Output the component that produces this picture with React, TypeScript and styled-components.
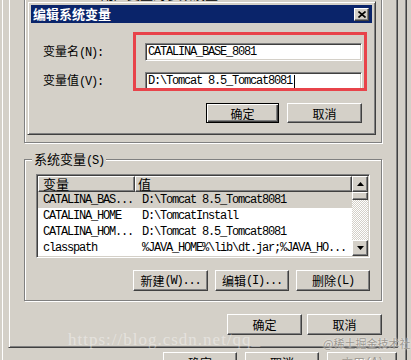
import React from "react";
import styled, { createGlobalStyle, css } from "styled-components";

const GlobalStyle = createGlobalStyle`
  html, body {
    margin: 0;
    padding: 0;
    background: #d4d0c8;
  }
`;

/* Styles */
const windowFrame = css`
  box-sizing: border-box;
  border: 1px solid;
  border-color: #d4d0c8 #404040 #404040 #d4d0c8;
  box-shadow: inset 1px 1px 0 #fff, inset -1px -1px 0 #808080;
  background: #d4d0c8;
`;

const raised = css`
  box-sizing: border-box;
  border: 1px solid;
  border-color: #fff #404040 #404040 #fff;
  box-shadow: inset -1px -1px 0 #808080, inset 1px 1px 0 #d4d0c8;
  background: #d4d0c8;
`;

const sunken = css`
  box-sizing: border-box;
  border: 1px solid;
  border-color: #808080 #fff #fff #808080;
  box-shadow: inset 1px 1px 0 #404040, inset -1px -1px 0 #d4d0c8;
`;

const Desktop = styled.div`
  position: relative;
  width: 411px;
  height: 360px;
  overflow: hidden;
  background: #d4d0c8;
  font-family: "Noto Sans CJK SC", sans-serif;
  font-size: 12px;
  color: #000;
`;

const Window = styled.div<{ $left: number; $top: number; $width: number; $height: number }>`
  ${windowFrame};
  position: absolute;
  left: ${p => p.$left}px;
  top: ${p => p.$top}px;
  width: ${p => p.$width}px;
  height: ${p => p.$height}px;
  display: flex;
  flex-direction: column;
`;

const BackWindow = styled(Window)`
  padding: 371px 9px 0 0;
`;

const EnvWindow = styled(Window)`
  padding: 15px 15px 11px 15px;
`;

const EditWindow = styled(Window)`
  padding: 3px;
`;

const TitleBar = styled.div`
  height: 18px;
  background: #0a246a;
  display: flex;
  align-items: center;
  justify-content: space-between;
  padding: 0 3px 0 2px;
`;

const TitleText = styled.span`
  color: #fff;
  font-weight: bold;
  font-size: 13px;
  line-height: 18px;
`;

const CloseBox = styled.div`
  ${raised};
  width: 15px;
  height: 13px;
  display: flex;
  align-items: center;
  justify-content: center;
`;

const EditBody = styled.div`
  padding: 19px 10px 0 12px;
  display: flex;
  flex-direction: column;
`;

const FieldGrid = styled.div`
  display: grid;
  grid-template-columns: 102px 1fr;
  row-gap: 9px;
  align-items: center;
`;

const FieldLabel = styled.span`
  font-size: 12px;
  line-height: 18px;
`;

const Mono = styled.span`
  font-family: "Liberation Mono", monospace;
  font-size: 12px;
  letter-spacing: -1.2px;
`;

const TextBox = styled.div`
  ${sunken};
  height: 18px;
  background: #fff;
  padding: 0 2px;
  display: flex;
  align-items: center;
  font-family: "Liberation Mono", monospace;
  font-size: 12px;
  letter-spacing: -1.2px;
  white-space: pre;
`;

const Caret = styled.span`
  display: inline-block;
  width: 0;
  height: 13px;
  border-left: 1px solid #000;
  margin-left: 2px;
`;

const ButtonRow = styled.div<{ $gap: number; $mt: number }>`
  display: flex;
  justify-content: flex-end;
  gap: ${p => p.$gap}px;
  margin-top: ${p => p.$mt}px;
`;

const Button = styled.button<{ $w: number; $h?: number; $default?: boolean }>`
  ${raised};
  width: ${p => p.$w}px;
  height: ${p => p.$h ?? 21}px;
  padding: 0;
  margin: 0;
  font-family: "Noto Sans CJK SC", sans-serif;
  font-size: 12px;
  color: #000;
  display: flex;
  align-items: center;
  justify-content: center;
  white-space: pre;
  ${p => p.$default && css`
    border-color: #000;
    box-shadow: inset 1px 1px 0 #fff, inset -1px -1px 0 #404040, inset -2px -2px 0 #808080;
  `}
  &:disabled {
    color: #a09c94;
    text-shadow: 1px 1px 0 #fff;
  }
`;

const GroupBox = styled.div<{ $h: number }>`
  position: relative;
  box-sizing: border-box;
  height: ${p => p.$h}px;
  border: 1px solid #808080;
  box-shadow: inset 1px 1px 0 #fff, 1px 1px 0 #fff;
  display: flex;
  flex-direction: column;
`;

const UserGroup = styled(GroupBox)`
  padding: 9px 10px 0 76px;
`;

const SystemGroup = styled(GroupBox)`
  margin-top: 16px;
  padding: 14px 11px 9px 11px;
`;

const GroupLabel = styled.span`
  position: absolute;
  top: -9px;
  left: 7px;
  padding: 0 2px;
  background: #d4d0c8;
  font-size: 13px;
  line-height: 16px;
`;

const HiddenLine = styled.span`
  font-size: 13px;
  line-height: 15px;
`;

const ListView = styled.div`
  ${sunken};
  height: 84px;
  background: #fff;
  padding: 1px;
  display: flex;
`;

const Table = styled.div`
  flex: 1;
  display: flex;
  flex-direction: column;
  min-width: 0;
`;

const HeaderRow = styled.div`
  display: flex;
  height: 16px;
`;

const HeaderCell = styled.div<{ $w?: number; $pl: number }>`
  ${raised};
  ${p => (p.$w ? `width: ${p.$w}px;` : "flex: 1;")}
  height: 16px;
  padding-left: ${p => p.$pl}px;
  font-size: 13px;
  line-height: 14px;
  overflow: hidden;
`;

const Row = styled.div<{ $selected?: boolean }>`
  display: flex;
  height: 16px;
  align-items: center;
  background: ${p => (p.$selected ? "#d4d0c8" : "#fff")};
  font-family: "Liberation Mono", monospace;
  font-size: 12px;
  letter-spacing: -1.2px;
  white-space: pre;
`;

const Cell = styled.div<{ $w?: number; $pl: number }>`
  ${p => (p.$w ? `width: ${p.$w}px;` : "flex: 1;")}
  padding-left: ${p => p.$pl}px;
  box-sizing: border-box;
  overflow: hidden;
`;

const ScrollBar = styled.div`
  width: 16px;
  display: flex;
  flex-direction: column;
`;

const ScrollButton = styled.div<{ $h: number }>`
  ${raised};
  height: ${p => p.$h}px;
  display: flex;
  align-items: center;
  justify-content: center;
`;

const ScrollTrack = styled.div`
  flex: 1;
  background-color: #fff;
  background-image: repeating-conic-gradient(#d4d0c8 0 25%, #fff 0 50%);
  background-size: 2px 2px;
`;

const RedMark = styled.div`
  position: absolute;
  left: 133px;
  top: 32px;
  width: 234px;
  height: 59px;
  box-sizing: border-box;
  border: 3px solid #e8434a;
  pointer-events: none;
`;

const WatermarkUrl = styled.span`
  position: absolute;
  left: 68px;
  top: 333px;
  font-family: "Liberation Serif", serif;
  font-size: 17px;
  line-height: 14px;
  letter-spacing: 1px;
  color: rgba(255, 255, 255, 0.4);
  white-space: nowrap;
`;

const WatermarkTag = styled.span`
  position: absolute;
  left: 323px;
  top: 337px;
  font-size: 11px;
  line-height: 13px;
  color: #9c9891;
  text-shadow: 0 0 2px #fff;
  white-space: nowrap;
`;

/* Icons */
const CloseIcon = () => (
  <svg width="8" height="7" viewBox="0 0 8 7">
    <path d="M0.5 0.5 L7.5 6.5 M7.5 0.5 L0.5 6.5" stroke="#000" strokeWidth="1.6" />
  </svg>
);

const Arrow = ({ down }: { down?: boolean }) => (
  <svg width="7" height="4" viewBox="0 0 7 4">
    <polygon points={down ? "0,0 7,0 3.5,4" : "0,4 7,4 3.5,0"} fill="#000" />
  </svg>
);

/* Data */
const rows = [
  { name: "CATALINA_BAS...", value: "D:\\Tomcat 8.5_Tomcat8081", selected: true },
  { name: "CATALINA_HOME", value: "D:\\TomcatInstall" },
  { name: "CATALINA_HOM...", value: "D:\\Tomcat 8.5_Tomcat8081" },
  { name: "classpath", value: "%JAVA_HOME%\\lib\\dt.jar;%JAVA_HO..." },
];

/* Main Component */
export default function App() {
  return (
    <Desktop>
      <GlobalStyle />

      <BackWindow $left={1} $top={-20} $width={406} $height={420}>
        <ButtonRow $gap={8} $mt={0}>
          <Button $w={74}>确定</Button>
          <Button $w={74}>取消</Button>
          <Button $w={70} disabled>应用<Mono>(A)</Mono></Button>
        </ButtonRow>
      </BackWindow>

      <EnvWindow $left={8} $top={-40} $width={390} $height={388}>
        <UserGroup $h={167}>
          <HiddenLine>用户变量的参数设置</HiddenLine>
        </UserGroup>

        <SystemGroup $h={142}>
          <GroupLabel>系统变量<Mono>(S)</Mono></GroupLabel>
          <ListView>
            <Table>
              <HeaderRow>
                <HeaderCell $w={97} $pl={4}>变量</HeaderCell>
                <HeaderCell $pl={2}>值</HeaderCell>
              </HeaderRow>
              {rows.map(r => (
                <Row key={r.name} $selected={r.selected}>
                  <Cell $w={99} $pl={5}>{r.name}</Cell>
                  <Cell $pl={5}>{r.value}</Cell>
                </Row>
              ))}
            </Table>
            <ScrollBar>
              <ScrollButton $h={16}><Arrow /></ScrollButton>
              <ScrollButton $h={8} />
              <ScrollTrack />
              <ScrollButton $h={16}><Arrow down /></ScrollButton>
            </ScrollBar>
          </ListView>
          <ButtonRow $gap={7} $mt={12}>
            <Button $w={75}>新建<Mono>(W)...</Mono></Button>
            <Button $w={74}>编辑<Mono>(I)...</Mono></Button>
            <Button $w={74}>删除<Mono>(L)</Mono></Button>
          </ButtonRow>
        </SystemGroup>

        <ButtonRow $gap={5} $mt={13}>
          <Button $w={75}>确定</Button>
          <Button $w={75}>取消</Button>
        </ButtonRow>
      </EnvWindow>

      <EditWindow $left={27} $top={1} $width={349} $height={134}>
        <TitleBar>
          <TitleText>编辑系统变量</TitleText>
          <CloseBox><CloseIcon /></CloseBox>
        </TitleBar>
        <EditBody>
          <FieldGrid>
            <FieldLabel>变量名<Mono>(N):</Mono></FieldLabel>
            <TextBox>CATALINA_BASE_8081</TextBox>
            <FieldLabel>变量值<Mono>(V):</Mono></FieldLabel>
            <TextBox>D:\Tomcat 8.5_Tomcat8081<Caret /></TextBox>
          </FieldGrid>
          <ButtonRow $gap={8} $mt={12}>
            <Button $w={73} $h={20} $default>确定</Button>
            <Button $w={75} $h={20}>取消</Button>
          </ButtonRow>
        </EditBody>
      </EditWindow>

      <RedMark />
      <WatermarkUrl>https://blog.csdn.net/qq_</WatermarkUrl>
      <WatermarkTag>@稀土掘金技术社区</WatermarkTag>
    </Desktop>
  );
}
